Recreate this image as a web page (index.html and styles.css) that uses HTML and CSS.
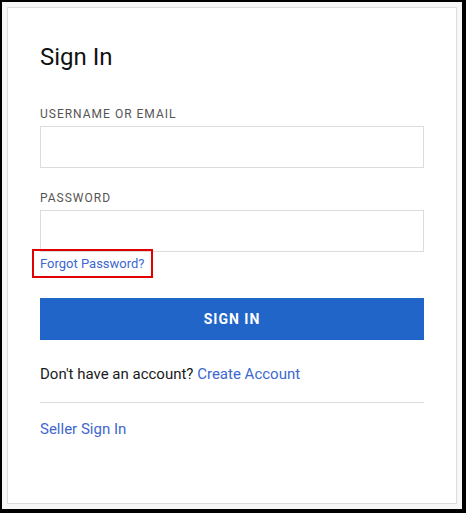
FILE: index.html
```html
<!DOCTYPE html>
<html lang="en">
<head>
    <meta charset="UTF-8">
    <meta name="viewport" content="width=device-width, initial-scale=1.0">
    <title>Sign In</title>
    <link rel="stylesheet" href="styles.css">
</head>
<body>
    <div class="frame">
        <div class="card">
            <form action="">
                <h2>Sign In</h2>

                <label class="field">
                    <span class="field-label">USERNAME OR EMAIL</span>
                    <input type="text" name="username" id="username">
                </label>

                <label class="field">
                    <span class="field-label">PASSWORD</span>
                    <input type="password" name="password" id="password">
                </label>

                <a href="#" class="forgot">Forgot Password?</a>

                <input type="button" value="SIGN IN" id="submit-btn">

                <p class="signup">Don't have an account? <a href="#">Create Account</a></p>

                <hr>

                <a href="#" class="seller">Seller Sign In</a>
            </form>
        </div>
    </div>
</body>
</html>
```

FILE: styles.css
```css
body{
  margin: 0;
  background-color: #000;
  font-family: Roboto, "Liberation Sans", sans-serif;
}

.frame{
  margin: 2px 4px 4px 2px;
  height: 507px;
  padding: 5px;
  box-sizing: border-box;
  background-color: #f7f7f7;
}

.card{
  height: 100%;
  box-sizing: border-box;
  border: 1px solid #dcdcdc;
  background-color: #fff;
  padding: 35px 32px 0;
}

form{
  display: flex;
  flex-direction: column;
  align-items: flex-start;
}

h2{
  margin: 0 0 35px;
  font-size: 24px;
  line-height: 28px;
  font-weight: 400;
  color: #111;
}

.field{
  display: flex;
  flex-direction: column;
  gap: 3px;
  width: 100%;
  margin-bottom: 22px;
}

.field:last-of-type{
  margin-bottom: 0;
}

.field-label{
  font-size: 12px;
  line-height: 17px;
  letter-spacing: 1px;
  color: #555;
}

input[type=text], input[type=password]{
  height: 42px;
  width: 100%;
  box-sizing: border-box;
  border: 1px solid #dcdcdc;
  border-radius: 0;
  padding: 0 12px;
  font-size: 15px;
  font-family: inherit;
}

a{
  color: #3d67cf;
  text-decoration: none;
}

.forgot{
  position: relative;
  margin-top: 4px;
  font-size: 13px;
  line-height: 16px;
}

.forgot::after{
  content: "";
  position: absolute;
  top: -7px;
  bottom: -6px;
  left: -8px;
  right: -8px;
  border: 2px solid #e00000;
}

input[type=button]{
  margin-top: 26px;
  width: 100%;
  height: 42px;
  border: none;
  border-radius: 0;
  background-color: #2165c9;
  color: #fff;
  font-family: inherit;
  font-size: 14px;
  font-weight: 700;
  letter-spacing: 1px;
  cursor: pointer;
}

.signup{
  margin: 24px 0 0;
  font-size: 15px;
  line-height: 20px;
  color: #1a1a1a;
}

hr{
  width: 100%;
  margin: 18px 0 16px;
  border: none;
  border-top: 1px solid #dcdcdc;
}

.seller{
  font-size: 15px;
  line-height: 20px;
}
```
